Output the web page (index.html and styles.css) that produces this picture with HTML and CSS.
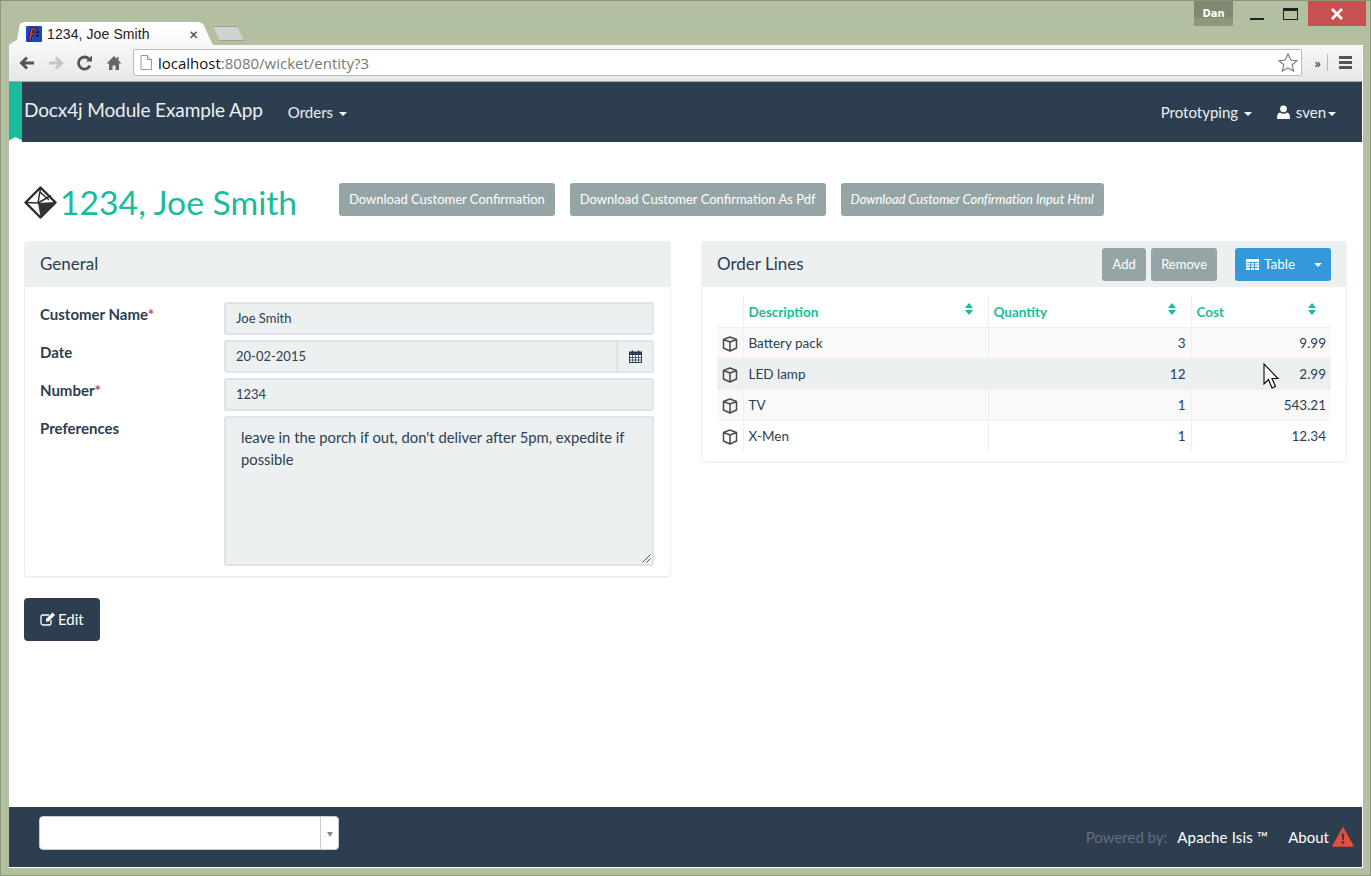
FILE: index.html
```html
<!DOCTYPE html>
<html lang="en">
<head>
    <meta charset="UTF-8">
    <title>1234, Joe Smith</title>
    <link rel="stylesheet" href="styles.css">
</head>
<body>
<div class="window">
    <div class="titlebar">
        <div class="tab">
            <svg class="favicon" width="16" height="16" viewBox="0 0 16 16"><rect width="16" height="16" rx="1" fill="#1c46c8"/><path d="M5 2h6l-.5 2H7L6.500 7h3l-.5 2H6l-1 5H2.500z" fill="#e2401c" stroke="#111" stroke-width=".6"/><rect x="11" y="5" width="2" height="2" fill="#111"/><rect x="10.500" y="9" width="2" height="2" fill="#111"/></svg>
            <span class="tab-title">1234, Joe Smith</span>
            <span class="tab-close">×</span>
        </div>
        <div class="newtab"></div>
        <div class="titlebar-right">
            <div class="user-badge">Dan</div>
            <div class="winbtn"><span class="win-min"></span></div>
            <div class="winbtn"><span class="win-max"></span></div>
            <div class="win-close">
                <svg width="14" height="12" viewBox="0 0 14 12"><path d="M2 1l10 10M12 1L2 11" stroke="#fff" stroke-width="2.600" fill="none"/></svg>
            </div>
        </div>
    </div>

    <div class="inner">
        <div class="toolbar">
            <svg class="tool" width="18" height="16" viewBox="0 0 18 16"><path d="M16 8H4M9 2.500L3.500 8 9 13.500" stroke="#555" stroke-width="3" fill="none"/></svg>
            <svg class="tool" width="18" height="16" viewBox="0 0 18 16"><path d="M2 8h12M9 2.500L14.500 8 9 13.500" stroke="#c4c4c4" stroke-width="3" fill="none"/></svg>
            <svg class="tool" width="18" height="16" viewBox="0 0 18 16"><path d="M14 10.500A6 6 0 1 1 13 4" stroke="#555" stroke-width="2.800" fill="none"/><path d="M10 6.500h6v-6z" fill="#555"/></svg>
            <svg class="tool" width="18" height="16" viewBox="0 0 18 16"><path d="M9 1L1.500 8.500H4V15h3.500v-4.500h3V15H14V8.500h2.500L13.500 5.500V2H12v2z" fill="#666"/></svg>
            <div class="omnibox">
                <svg width="12" height="15" viewBox="0 0 12 15"><path d="M1 .5h6.500l4 4v10H1z" fill="#fff" stroke="#999"/><path d="M7.500 .5v4h4" fill="#eee" stroke="#999"/></svg>
                <span class="url"><span class="url-host">localhost</span>:8080/wicket/entity?3</span>
                <svg class="star" width="20" height="19" viewBox="0 0 20 19"><path d="M10 1l2.700 6 6.300.6-4.800 4.200 1.500 6.300L10 14.800l-5.700 3.300 1.500-6.300L1 7.600 7.300 7z" fill="#fff" stroke="#777" stroke-width="1.100"/></svg>
            </div>
            <span class="overflow-btn">»</span>
            <span class="tool-sep"></span>
            <div class="menu-btn"><span></span><span></span><span></span></div>
        </div>

        <nav class="navbar">
            <div class="ribbon"></div>
            <a class="brand">Docx4j Module Example App</a>
            <a class="nav-link">Orders <i class="caret"></i></a>
            <div class="nav-right">
                <a class="nav-link">Prototyping <i class="caret"></i></a>
                <a class="nav-link nav-user">
                    <svg width="13" height="14" viewBox="0 0 13 14"><circle cx="6.500" cy="3.800" r="3.400" fill="#fff"/><path d="M.5 14c-.5 0-.5-.5-.5-1 0-3 1-5.500 3-5.500 1 .8 2.200 1.200 3.500 1.200s2.500-.4 3.500-1.200c2 0 3 2.500 3 5.500 0 .5 0 1-.5 1z" fill="#fff"/></svg>
                    sven<i class="caret"></i>
                </a>
            </div>
        </nav>

        <main class="content">
            <div class="page-head">
                <div class="title">
                    <svg width="33" height="33" viewBox="0 0 33 33"><path d="M16.500 1.500L31.500 16.500 16.500 31.500 1.500 16.500z" fill="#fff" stroke="#2b2b2b" stroke-width="2.400" stroke-linejoin="round"/><path d="M16.500 31L14 17 31 16z" fill="#333"/><path d="M16.500 2L14 17 2 16.500M14 17l13-7.500M16 6l9 8" stroke="#2b2b2b" stroke-width="1.500" fill="none"/></svg>
                    <h1>1234, Joe Smith</h1>
                </div>
                <div class="actions">
                    <a class="btn btn-grey">Download Customer Confirmation</a>
                    <a class="btn btn-grey">Download Customer Confirmation As Pdf</a>
                    <a class="btn btn-grey btn-em">Download Customer Confirmation Input Html</a>
                </div>
            </div>

            <div class="columns">
                <div class="left-col">
                    <section class="panel">
                        <div class="panel-head"><h3>General</h3></div>
                        <div class="panel-body form">
                            <label class="lbl">Customer Name<span class="req">*</span></label>
                            <div class="field">Joe Smith</div>
                            <label class="lbl">Date</label>
                            <div class="date-group">
                                <div class="field">20-02-2015</div>
                                <div class="addon">
                                    <svg width="13" height="13" viewBox="0 0 13 13"><rect x=".5" y="2" width="12" height="10.500" fill="#fff" stroke="#2c3e50"/><path d="M.5 2h12v3H.5z" fill="#2c3e50"/><path d="M3.500 5v7.500M6.500 5v7.500M9.500 5v7.500M.5 7.500h12M.5 10h12" stroke="#2c3e50" stroke-width=".8"/><path d="M3.500 .5v2.500M9.500 .5v2.500" stroke="#2c3e50" stroke-width="1.500"/></svg>
                                </div>
                            </div>
                            <label class="lbl">Number<span class="req">*</span></label>
                            <div class="field">1234</div>
                            <label class="lbl">Preferences</label>
                            <div class="field area">leave in the porch if out, don't deliver after 5pm, expedite if possible
                                <svg class="grip" width="9" height="9" viewBox="0 0 9 9"><path d="M8.500 .5l-8 8M8.500 4.500l-4 4" stroke="#555" fill="none"/></svg>
                            </div>
                        </div>
                    </section>
                    <a class="btn-edit">
                        <svg width="16" height="14" viewBox="0 0 16 14"><path d="M11 8v3a2 2 0 0 1-2 2H3a2 2 0 0 1-2-2V5a2 2 0 0 1 2-2h6" fill="none" stroke="#fff" stroke-width="1.300"/><path d="M6 7l6.500-6.500 2.500 2.500L8.500 9.500H6z" fill="#fff"/></svg>
                        Edit
                    </a>
                </div>

                <section class="panel">
                    <div class="panel-head">
                        <h3>Order Lines</h3>
                        <div class="panel-tools">
                            <a class="btn btn-grey btn-small">Add</a>
                            <a class="btn btn-grey btn-small">Remove</a>
                            <div class="btn-blue">
                                <span class="btn-blue-main">
                                    <svg width="13" height="11" viewBox="0 0 13 11"><path d="M0 0h13v11H0z" fill="#fff"/><path d="M.5 3.500h12M.5 6h12M.5 8.500h12M4.500 3v8M8.500 3v8" stroke="#3498db" stroke-width=".9"/></svg>
                                    Table
                                </span>
                                <span class="btn-blue-drop"><i class="caret"></i></span>
                            </div>
                        </div>
                    </div>
                    <div class="table-wrap">
                        <table class="lines">
                            <thead>
                                <tr>
                                    <th class="c-icon"></th>
                                    <th class="c-desc">Description<i class="sort"></i></th>
                                    <th class="c-qty">Quantity<i class="sort"></i></th>
                                    <th class="c-cost">Cost<i class="sort"></i></th>
                                </tr>
                            </thead>
                            <tbody>
                                <tr class="odd">
                                    <td class="c-icon"><svg class="cube" width="16" height="16" viewBox="0 0 16 16"><path d="M8 1l6.500 2.500V12L8 15l-6.500-3V3.500zM1.500 3.500L8 6l6.500-2.500M8 6v9" fill="none" stroke="#4a4a4a" stroke-width="1.500" stroke-linejoin="round"/></svg></td>
                                    <td>Battery pack</td><td class="num">3</td><td class="num">9.99</td>
                                </tr>
                                <tr class="hover">
                                    <td class="c-icon"><svg class="cube" width="16" height="16" viewBox="0 0 16 16"><path d="M8 1l6.500 2.500V12L8 15l-6.500-3V3.500zM1.500 3.500L8 6l6.500-2.500M8 6v9" fill="none" stroke="#4a4a4a" stroke-width="1.500" stroke-linejoin="round"/></svg></td>
                                    <td>LED lamp</td><td class="num">12</td><td class="num">2.99</td>
                                </tr>
                                <tr class="odd">
                                    <td class="c-icon"><svg class="cube" width="16" height="16" viewBox="0 0 16 16"><path d="M8 1l6.500 2.500V12L8 15l-6.500-3V3.500zM1.500 3.500L8 6l6.500-2.500M8 6v9" fill="none" stroke="#4a4a4a" stroke-width="1.500" stroke-linejoin="round"/></svg></td>
                                    <td>TV</td><td class="num">1</td><td class="num">543.21</td>
                                </tr>
                                <tr>
                                    <td class="c-icon"><svg class="cube" width="16" height="16" viewBox="0 0 16 16"><path d="M8 1l6.500 2.500V12L8 15l-6.500-3V3.500zM1.500 3.500L8 6l6.500-2.500M8 6v9" fill="none" stroke="#4a4a4a" stroke-width="1.500" stroke-linejoin="round"/></svg></td>
                                    <td>X-Men</td><td class="num">1</td><td class="num">12.34</td>
                                </tr>
                            </tbody>
                        </table>
                    </div>
                </section>
            </div>
        </main>

        <footer class="footer">
            <div class="theme-select"><span class="theme-arrow"></span></div>
            <div class="footer-right">
                <span class="powered">Powered by:</span>
                <a class="foot-link foot-isis">Apache Isis ™</a>
                <a class="foot-link foot-about">About</a>
                <svg width="22" height="20" viewBox="0 0 22 20"><path d="M11 1L21 19H1z" fill="#e74c3c" stroke="#e74c3c" stroke-width="1.500" stroke-linejoin="round"/><path d="M9.700 6.500h2.600l-.4 6.500H10.100z" fill="#2c3e50"/><rect x="9.800" y="14.300" width="2.400" height="2.400" fill="#2c3e50"/></svg>
            </div>
        </footer>
    </div>
    <svg class="pointer" width="17" height="27" viewBox="0 0 17 27"><path d="M1 1v20l4.500-4.500 3.500 8.500 3.500-1.500-3.500-8h6z" fill="#fff" stroke="#000" stroke-width="1.100"/></svg>
</div>
</body>
</html>
```
FILE: styles.css
```css
*{box-sizing: border-box;}
html, body{
    margin: 0;
    height: 100%;
    overflow: hidden;
}
body{
    font-family: "Lato", sans-serif;
    color: #2c3e50;
    background-color: #b2bfa0;
}
a{text-decoration: none;}

.window{
    height: 876px;
    display: flex;
    flex-direction: column;
    border: 1px solid #8b9679;
    padding: 0 7px 7px 8px;
    position: relative;
}

/* browser frame */
.titlebar{
    height: 44px;
    display: flex;
    align-items: flex-end;
    flex: none;
}
.tab{
    width: 204px;
    height: 23px;
    padding: 4px 12px 0 17px;
    display: flex;
    align-items: flex-start;
    gap: 5px;
    background: linear-gradient(#fff, #f8f8f8);
    clip-path: polygon(0 100%, 5px 85%, 8px 78%, 11px 8%, 15px 0, 190px 0, 194px 8%, 204px 100%);
    font-size: 14px;
    color: #222;
}
.favicon{flex: none;}
.tab-title{
    flex: 1;
    font-family: "Liberation Sans", sans-serif;
    line-height: 17px;
    letter-spacing: 0.1px;
}
.tab-close{
    color: #555;
    font-size: 15px;
    line-height: 16px;
    font-weight: bold;
    margin-right: 3px;
}
.newtab{
    width: 31px;
    height: 15px;
    margin: 0 0 4px 0;
    background-color: #cbd4d0;
    border: 1px solid #9ba58e;
    clip-path: polygon(0 0, 24px 0, 31px 100%, 7px 100%);
}
.titlebar-right{
    margin-left: auto;
    align-self: flex-start;
    display: flex;
    align-items: flex-start;
    margin-right: -3px;
}
.user-badge{
    width: 39px;
    height: 25px;
    background: linear-gradient(#7f8970 70%, #8c977b 70%);
    color: #fff;
    font-family: "DejaVu Sans", sans-serif;
    font-size: 10px;
    font-weight: bold;
    text-align: center;
    line-height: 25px;
}
.winbtn{
    width: 37px;
    height: 25px;
    position: relative;
}
.win-min{
    display: block;
    width: 14px;
    height: 2px;
    margin: 17px 0 0 17px;
    background-color: #222;
}
.win-max{
    display: block;
    width: 15px;
    height: 12px;
    margin: 7px 0 0 13px;
    border: 1px solid #222;
    border-top-width: 3px;
}
.win-close{
    width: 58px;
    height: 25px;
    margin-left: 1px;
    background-color: #c75050;
    display: flex;
    align-items: center;
    justify-content: center;
}

.inner{
    flex: 1;
    display: flex;
    flex-direction: column;
    min-height: 0;
    background-color: #fff;
    border-right: 1px solid #fff;
    overflow: hidden;
}
.toolbar{
    height: 37px;
    flex: none;
    display: flex;
    align-items: center;
    padding: 0 10px 1px 9px;
    background: linear-gradient(#f8f8f8, #e6e6e6);
    border-bottom: 1px solid #a9a9a9;
}
.tool{
    flex: none;
    margin-right: 11px;
}
.omnibox{
    flex: 1;
    height: 27px;
    margin-left: -1px;
    padding: 0 3px 0 6px;
    display: flex;
    align-items: center;
    gap: 6px;
    background-color: #fff;
    border: 1px solid #bbb;
    border-radius: 2px;
}
.url{
    flex: 1;
    font-family: "Open Sans", sans-serif;
    font-size: 15px;
    color: #777;
}
.url-host{color: #111;}
.overflow-btn{
    margin-left: 13px;
    font-size: 14px;
    font-weight: bold;
    color: #444;
}
.tool-sep{
    width: 1px;
    height: 17px;
    margin: 0 10px 0 6px;
    background-color: #bbb;
}
.menu-btn{
    width: 13px;
    margin-left: 1px;
    display: flex;
    flex-direction: column;
    gap: 2px;
}
.menu-btn span{
    height: 3px;
    background-color: #555;
}

/* navbar */
.navbar{
    height: 60px;
    flex: none;
    display: flex;
    align-items: center;
    padding: 0 26px 0 15px;
    background-color: #2c3e50;
    position: relative;
    color: #fff;
}
.ribbon{
    position: absolute;
    left: 0;
    top: 0;
    width: 13px;
    height: 60px;
    background-color: #18bc9c;
}
.ribbon::after{
    content: "";
    position: absolute;
    left: 0;
    bottom: 0;
    width: 13px;
    height: 5px;
    background-color: #fff;
    clip-path: polygon(50% 0, 100% 70%, 100% 100%, 0 100%, 0 70%);
}
.brand{
    font-size: 19px;
    letter-spacing: -0.12px;
    color: #ecf0f1;
    margin-right: 25px;
    position: relative;
    top: -3px;
}
.nav-link{
    font-size: 15px;
    color: #ecf0f1;
    white-space: nowrap;
}
.nav-right{
    margin-left: auto;
    display: flex;
    gap: 25px;
}
.nav-user svg{
    vertical-align: -1px;
    margin-right: 2px;
}
.caret{
    display: inline-block;
    width: 0;
    height: 0;
    margin-left: 2px;
    vertical-align: middle;
    border-top: 4px solid #fff;
    border-left: 4px solid transparent;
    border-right: 4px solid transparent;
}

/* page */
.content{
    flex: 1;
    min-height: 0;
    padding: 41px 16px 0 15px;
}
.page-head{
    display: flex;
    align-items: center;
    height: 33px;
    margin-bottom: 25px;
}
.title{
    display: flex;
    align-items: center;
    gap: 3px;
    width: 315px;
    margin-top: 5px;
}
.title svg{flex: none;}
h1{
    margin: 0;
    font-size: 33.700px;
    font-weight: 400;
    color: #18bc9c;
    white-space: nowrap;
    line-height: 40px;
}
.actions{
    display: flex;
    gap: 15px;
}
.btn{
    display: block;
    height: 33px;
    padding: 0 10px;
    border-radius: 3px;
    font-size: 13px;
    line-height: 33px;
    color: #fff;
    white-space: nowrap;
}
.btn-grey{background-color: #95a5a6;}
.btn-em{
    font-style: italic;
    letter-spacing: -0.07px;
}
.columns{
    display: grid;
    grid-template-columns: 647px 646px;
    gap: 30px;
    align-items: start;
}
.panel{
    border: 1px solid #ecf0f1;
    border-radius: 4px;
    box-shadow: 0 1px 1px rgba(0, 0, 0, 0.05);
    background-color: #fff;
}
.panel-head{
    height: 46px;
    padding: 0 16px;
    margin: -1px -1px 0 -1px;
    display: flex;
    align-items: center;
    background-color: #ecf0f1;
    border-radius: 4px 4px 0 0;
}
h3{
    margin: 0 0 2px 0;
    font-size: 17px;
    font-weight: 400;
    color: #2c3e50;
}
.form{
    display: grid;
    grid-template-columns: 184px 430px;
    row-gap: 5px;
    padding: 15px 16px 10px 15px;
}
.lbl{
    font-size: 15px;
    font-weight: bold;
    line-height: 24px;
    color: #2c3e50;
}
.req{color: #b94a6a;}
.field{
    height: 33px;
    padding: 0 10px;
    background-color: #ecf0f1;
    border: 2px solid #dce4ec;
    border-radius: 3px;
    font-size: 13px;
    line-height: 29px;
    color: #2c3e50;
}
.date-group{
    display: flex;
}
.date-group .field{
    flex: 1;
    border-radius: 3px 0 0 3px;
}
.addon{
    width: 36px;
    height: 33px;
    display: flex;
    align-items: center;
    justify-content: center;
    background-color: #ecf0f1;
    border: 2px solid #dce4ec;
    border-left: 0;
    border-radius: 0 3px 3px 0;
}
.area{
    height: 150px;
    padding: 8px 15px;
    font-size: 14.800px;
    line-height: 22px;
    position: relative;
}
.grip{
    position: absolute;
    right: 1px;
    bottom: 1px;
}
.btn-edit{
    display: inline-flex;
    align-items: center;
    gap: 2px;
    height: 43px;
    margin-top: 21px;
    padding: 0 16px 2px;
    background-color: #2c3e50;
    border-radius: 4px;
    color: #fff;
    font-size: 15px;
}

/* order lines */
.panel-tools{
    margin-left: auto;
    display: flex;
    gap: 5px;
}
.btn-small:first-child{
    width: 44px;
    text-align: center;
    padding: 0;
}
.btn-blue{
    display: flex;
    height: 33px;
    margin-left: 13px;
    background-color: #3498db;
    border-radius: 3px;
    color: #fff;
    font-size: 13.500px;
    line-height: 33px;
}
.btn-blue-main{
    width: 68px;
    padding-left: 11px;
    white-space: nowrap;
}
.btn-blue-main svg{
    margin-right: 2px;
    vertical-align: -1px;
}
.btn-blue-drop{
    width: 28px;
    text-align: center;
}
.table-wrap{
    padding: 9px 15px 10px 15px;
}
.lines{
    width: 614px;
    table-layout: fixed;
    border-collapse: collapse;
    font-size: 13.500px;
}
.lines th{
    height: 31px;
    padding: 1px 5px 0;
    text-align: left;
    color: #18bc9c;
    font-weight: bold;
    border-left: 1px solid #ecf0f1;
    border-bottom: 1px solid #ecf0f1;
    position: relative;
}
.lines th.c-icon{border-left: 0;}
.lines td{
    height: 31px;
    padding: 0 5px;
    border-left: 1px solid #ecf0f1;
    border-top: 1px solid #ecf0f1;
    color: #2c3e50;
}
.lines td.c-icon{
    border-left: 0;
    padding: 2px 0 0 5px;
}
.lines tbody tr:first-child td{border-top: 0;}
.c-icon{width: 26px;}
.c-desc{width: 245px;}
.c-qty{width: 203px;}
.c-cost{width: 140px;}
.num{text-align: right;}
.odd td{background-color: #f9f9f9;}
.hover td{background-color: #ecf0f1; border-top-color: #ecf0f1;}
.hover + tr td{border-top-color: #ecf0f1;}
.cube{display: block;}
.sort{
    position: absolute;
    top: 7px;
    right: 14px;
    width: 9px;
    height: 12px;
}
.sort::before, .sort::after{
    content: "";
    position: absolute;
    left: 0;
    border-left: 4.500px solid transparent;
    border-right: 4.500px solid transparent;
}
.sort::before{
    top: 0;
    border-bottom: 5.500px solid #18bc9c;
}
.sort::after{
    bottom: 0;
    border-top: 5.500px solid #18bc9c;
}

/* footer */
.footer{
    height: 61px;
    flex: none;
    display: flex;
    align-items: center;
    padding: 0 8px 0 30px;
    background-color: #2c3e50;
    border-bottom: 1px solid #fff;
    position: relative;
}
.theme-select{
    width: 300px;
    height: 34px;
    position: relative;
    top: -4px;
    background-color: #fff;
    border: 1px solid #ccc;
    border-radius: 4px;
}
.theme-arrow{
    position: absolute;
    right: 0;
    top: 0;
    width: 18px;
    height: 100%;
    border-left: 1px solid #ccc;
}
.theme-arrow::after{
    content: "";
    position: absolute;
    left: 6px;
    top: 15px;
    border-top: 5px solid #888;
    border-left: 3px solid transparent;
    border-right: 3px solid transparent;
}
.footer-right{
    margin-left: auto;
    display: flex;
    align-items: center;
    font-size: 15px;
}
.powered{
    color: #666f78;
    margin-right: 10px;
}
.foot-link{color: #fff;}
.foot-isis{letter-spacing: 0.15px;}
.foot-about{margin: 0 3px 0 20px;}

/* mouse pointer in the capture */
.pointer{
    position: absolute;
    left: 1262px;
    top: 362px;
}
```
